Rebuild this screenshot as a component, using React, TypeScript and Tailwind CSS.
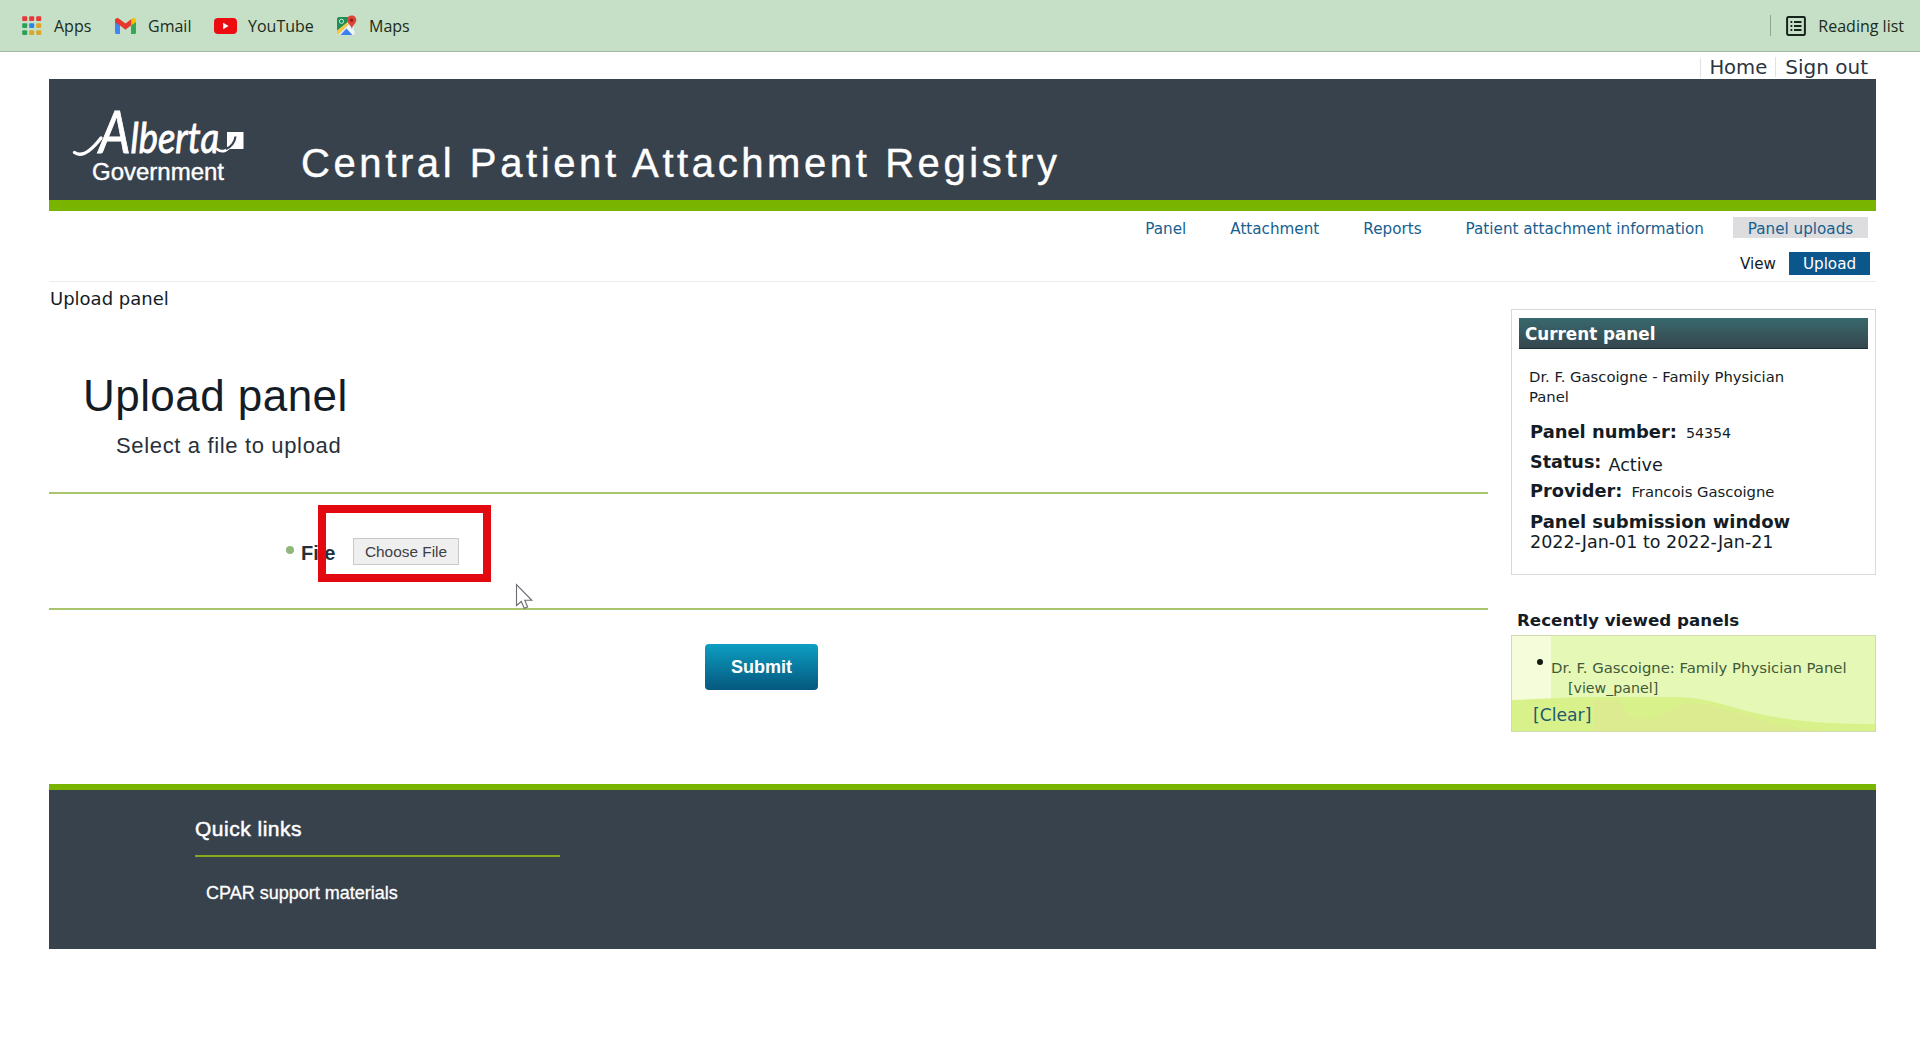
import type { ReactNode } from 'react';

const NAV_LINKS = ['Panel', 'Attachment', 'Reports', 'Patient attachment information'];

const APP_DOTS = [
  '#e5383b', '#e5383b', '#e5383b',
  '#2e9e5b', '#2b83ea', '#e0a526',
  '#2e9e5b', '#d9a62e', '#d9a62e',
];

function AppsIcon() {
  return (
    <svg width="20" height="20" viewBox="0 0 20 20">
      {APP_DOTS.map((fill, i) => (
        <rect key={i} x={(i % 3) * 7 + 0.2} y={Math.floor(i / 3) * 7 + 0.3} width="5" height="4.8" rx="1" fill={fill} />
      ))}
    </svg>
  );
}

function GmailIcon() {
  return (
    <svg width="21" height="16" viewBox="0 0 21 16">
      <path d="M0 2.5V14.5Q0 16 1.5 16H5V7L0 3Z" fill="#4285f4" />
      <path d="M21 2.5V14.5Q21 16 19.5 16H16V7L21 3Z" fill="#34a853" />
      <path d="M16 1.5V7.5L21 4V2.2C21 0 18.5-.6 17 .7Z" fill="#fbbc04" />
      <path d="M0 4.2V2.2C0 0 2.5-.6 4 .7L10.5 5.6 16.2 1.2V7.3L10.5 11.8 5 7.6Z" fill="#e5372e" />
    </svg>
  );
}

function YouTubeIcon() {
  return (
    <svg width="23" height="16" viewBox="0 0 23 16">
      <rect width="23" height="16" rx="4" fill="#ec0b10" />
      <path d="M9.2 4.7 14.6 8 9.2 11.3Z" fill="#fff" />
    </svg>
  );
}

function MapsIcon() {
  return (
    <svg width="21" height="21" viewBox="0 0 21 21">
      <path d="M1 4Q1 2 3 2H13L18 9V20H3Q1 20 1 18Z" fill="#dfe8ee" />
      <path d="M1 4Q1 2 3 2H12.5L11 8 1 18.5Z" fill="#1f8f55" />
      <path d="M1 15.5 11 7.5 12.5 9.5 2.2 19.7Q1 19 1 18Z" fill="#f5c84a" />
      <path d="M4.5 20 10.5 13.5 16.5 20Z" fill="#3b82f0" />
      <path d="M12 10 18.5 16.5V19L16.8 20 10.5 13.2Z" fill="#f2f5f3" />
      <circle cx="5.5" cy="6.3" r="2.1" fill="none" stroke="#cfeadb" strokeWidth="1" />
      <path d="M15.6 0.5C18.4 0.5 20.3 2.6 20.3 5.2 20.3 8.4 16.6 9.6 15.9 14 15 9.6 11 8.4 11 5.2 11 2.6 12.9 0.5 15.6 0.5Z" fill="#df4337" />
      <circle cx="15.6" cy="5.2" r="1.6" fill="#8d1f1a" />
    </svg>
  );
}

function ReadingListIcon() {
  return (
    <svg width="20" height="20" viewBox="0 0 20 20" fill="none" stroke="#17241b" strokeWidth="2">
      <rect x="1.1" y="1.1" width="17.8" height="17.8" rx="1.2" />
      <path d="M4.5 6H6.3M8 6H15.5M4.5 10H6.3M8 10H15.5M4.5 14H6.3M8 14H15.5" strokeWidth="1.9" />
    </svg>
  );
}

function AlbertaLogo() {
  return (
    <svg width="176" height="92" viewBox="0 -12 176 92" fill="none">
      <text
        x="27"
        y="47.5"
        fill="#fff"
        stroke="#fff"
        strokeWidth="0.9"
        fontFamily="Lato, 'Liberation Sans', sans-serif"
        fontStyle="italic"
        textLength="120"
        lengthAdjust="spacingAndGlyphs"
      >
        <tspan fontSize="59">A</tspan>
        <tspan fontSize="43">lberta</tspan>
      </text>
      <path d="M2.5 47.5C10 53 19 46 29 33" stroke="#fff" strokeWidth="3.4" strokeLinecap="round" />
      <path d="M145 44C150 48.5 157 46 162 36" stroke="#fff" strokeWidth="2.6" strokeLinecap="round" />
      <rect x="155" y="27" width="16.5" height="17" fill="#fff" />
      <path d="M154 44C159 42 163 37 163.5 31.5" stroke="#38424d" strokeWidth="2.2" />
      <text x="20" y="75" fill="#fff" stroke="#fff" strokeWidth="0.4" fontSize="24" textLength="132" fontFamily="'Liberation Sans', Arial, sans-serif">
        Government
      </text>
    </svg>
  );
}

function Bookmark({ icon, label, className }: { icon: ReactNode; label: string; className: string }) {
  return (
    <div className={`flex items-center ${className}`}>
      {icon}
      <span className="pt-px">{label}</span>
    </div>
  );
}

function BookmarksBar() {
  return (
    <div className="flex h-[52px] items-center border-b border-[#a3b8a5] bg-[#c5e0c6] pl-[22px] pr-[16px] font-['Open_Sans','Noto_Sans',sans-serif] text-[16px] leading-[20px] text-[#1c2a20]">
      <Bookmark icon={<AppsIcon />} label="Apps" className="w-[93px] gap-[12px]" />
      <Bookmark icon={<GmailIcon />} label="Gmail" className="w-[99px] gap-[12px]" />
      <Bookmark icon={<YouTubeIcon />} label="YouTube" className="w-[122px] gap-[11px]" />
      <Bookmark icon={<MapsIcon />} label="Maps" className="gap-[12px]" />
      <div className="ml-auto mr-[15px] h-[21px] w-px bg-[#8fa492]" />
      <Bookmark icon={<ReadingListIcon />} label="Reading list" className="gap-[12px]" />
    </div>
  );
}

function CurrentPanel() {
  return (
    <section className="h-[266px] border border-[#d9d9dc] px-[7px] pt-[8px]">
      <h2 className="h-[31px] border-b border-[#1c3037] bg-gradient-to-b from-[#37696d] to-[#35464e] pl-[6px] text-[16.8px] font-bold leading-[32px] text-white">
        Current panel
      </h2>
      <div className="pl-[11px] pt-[18px]">
        <p className="-ml-px text-[14.8px] leading-[20px]">
          Dr. F. Gascoigne - Family Physician
          <br />
          Panel
        </p>
        <p className="mt-[13px] flex items-baseline gap-[9px] text-[14.2px] leading-[24px]">
          <b className="text-[17.9px]">Panel number:</b>54354
        </p>
        <p className="mt-[5px] flex gap-[7px] text-[17.6px] leading-[24px]">
          <b className="text-[17.6px]">Status:</b>
          <span className="pt-[3px]">Active</span>
        </p>
        <p className="mt-[2px] flex items-baseline gap-[9px] text-[14.8px] leading-[24px]">
          <b className="text-[17.8px]">Provider:</b>Francois Gascoigne
        </p>
        <p className="mt-[8px] text-[17.5px] leading-[20px]">
          <b className="text-[18px]">Panel submission window</b>
          <br />
          2022-Jan-01 to 2022-Jan-21
        </p>
      </div>
    </section>
  );
}

function RecentPanels() {
  return (
    <section className="mt-[33px]">
      <h2 className="pl-[6px] text-[16.7px] font-bold leading-[24px]">Recently viewed panels</h2>
      <div className="relative mt-[3px] h-[97px] border border-[#cfdcae] bg-[#e6f8b5]">
        <svg className="absolute inset-0" width="363" height="95" viewBox="0 0 363 95">
          <rect width="39" height="64" fill="#f5fcd9" />
          <path d="M0 64 70 61H165C220 62 230 88 363 88V95H0Z" fill="#d9f18b" />
          <path d="M82 95V64H105C118 75 112 85 135 83 160 80 158 67 180 67 215 68 240 88 310 95Z" fill="#dcea90" />
        </svg>
        <div className="relative pt-[22px] text-[14.85px] leading-[21px] text-[#3f5a3a]">
          <div className="flex whitespace-nowrap pl-[25px]">
            <span className="mr-[8px] mt-[1px] size-[6px] rounded-full bg-[#111a14]" />
            <span>Dr. F. Gascoigne: Family Physician Panel</span>
          </div>
          <div className="pl-[56px] text-[14.2px] leading-[19px]">[view_panel]</div>
          <a className="mt-[5px] block pl-[21px] text-[17.2px] leading-[24px] text-[#1d5a70]">[Clear]</a>
        </div>
      </div>
    </section>
  );
}

function UploadForm() {
  return (
    <div className="w-[1439px] pt-[7px]">
      <div className="pl-[1px] text-[18px] leading-[20px]">Upload panel</div>
      <div className="font-['Liberation_Sans',Arial,sans-serif]">
        <h1 className="mt-[63px] pl-[34px] text-[44px] leading-[48px] tracking-[0.45px]">Upload panel</h1>
        <p className="mt-[14px] pl-[67px] text-[22px] leading-[24px] tracking-[0.65px] text-[#28303a]">Select a file to upload</p>

        <div className="relative mt-[34px] flex h-[118px] items-center border-y-2 border-[#a9c46c] pl-[237px]">
          <span className="mr-[7px] mt-[-2px] size-[8px] rounded-full bg-[#8fb87a]" />
          <label className="mt-[3px] w-[52px] text-[20px] font-bold leading-[24px] text-[#27303a]">File</label>
          <button className="mt-px h-[27px] w-[106px] border border-[#c9c9cd] bg-[#efeff0] text-[15.4px] leading-[22px] text-[#3d3f46]">
            Choose File
          </button>
          {/* highlight and mouse pointer sit over the row */}
          <div className="absolute left-[269px] top-[11px] h-[77px] w-[173px] border-[8px] border-[#e20a10]" />
          <svg className="absolute left-[466px] top-[89px]" width="19" height="28" viewBox="0 0 19 28">
            <path d="M1.5 1.5V22.5L6.3 18.5 9.3 25.3 12.6 24 9.8 17.3H16.8Z" fill="#fff" stroke="#6a6a70" strokeWidth="1.1" />
          </svg>
        </div>

        <button className="ml-[656px] mt-[34px] block h-[46px] w-[113px] rounded-[4px] bg-gradient-to-b from-[#0d9fc2] to-[#06587f] text-[18px] font-bold text-white">
          Submit
        </button>
      </div>
    </div>
  );
}

export default function App() {
  return (
    <div className="h-[1052px] w-[1920px] overflow-hidden bg-white font-['DejaVu_Sans',Verdana,sans-serif] text-[#141c26]">
      <BookmarksBar />
      <div className="ml-[49px] w-[1827px]">
        <div className="flex h-[27px] items-baseline justify-end pr-[8px] pt-[5px] text-[20px] leading-[20px] text-[#2b3440]">
          <span className="border-l border-[#e2e2e2] pl-[8px] pr-[8px] text-[19.6px]">Home</span>
          <span className="border-l border-[#e2e2e2] pl-[9px]">Sign out</span>
        </div>
        <header className="h-[132px] border-b-[11px] border-[#79b500] bg-[#38424d]">
          <div className="flex">
            <div className="w-[252px] pl-[23px] pt-[14px]">
              <AlbertaLogo />
            </div>
            <h1 className="pt-[64px] font-['Liberation_Sans',Arial,sans-serif] text-[40px] leading-[40px] tracking-[3.6px] text-white [-webkit-text-stroke:0.4px_#fff]">
              Central Patient Attachment Registry
            </h1>
          </div>
        </header>

        <nav className="mt-[6px] flex justify-end gap-[44px] pr-[8px] text-[15.2px] leading-[24px] text-[#17608f]">
          {NAV_LINKS.map((label) => (
            <a key={label}>{label}</a>
          ))}
          <span className="-ml-[15px] h-[21px] w-[135px] bg-[#dddddf] text-center">Panel uploads</span>
        </nav>
        <div className="mt-[11px] flex justify-end pr-[6px] text-[15.2px] leading-[24px]">
          <a className="mr-[13px]">View</a>
          <a className="h-[23px] w-[81px] bg-[#0b568a] text-center text-white">Upload</a>
        </div>
        <div className="mt-[5px] h-px bg-[#ebebec]" />

        <div className="flex h-[502px] justify-between">
          <UploadForm />
          <aside className="w-[365px] pt-[27px]">
            <CurrentPanel />
            <RecentPanels />
          </aside>
        </div>

        <footer className="h-[165px] border-t-[6px] border-[#79b500] bg-[#38424d] pl-[146px] pt-[27px] font-['Liberation_Sans',Arial,sans-serif] text-white">
          <h3 className="w-[365px] border-b-2 border-[#86a81c] pb-[14px] text-[21px] leading-[24px] tracking-[0.5px] [-webkit-text-stroke:0.5px_#fff]">
            Quick links
          </h3>
          <a className="mt-[24px] block pl-[11px] text-[18px] leading-[24px] [-webkit-text-stroke:0.3px_#fff]">CPAR support materials</a>
        </footer>
      </div>
    </div>
  );
}
